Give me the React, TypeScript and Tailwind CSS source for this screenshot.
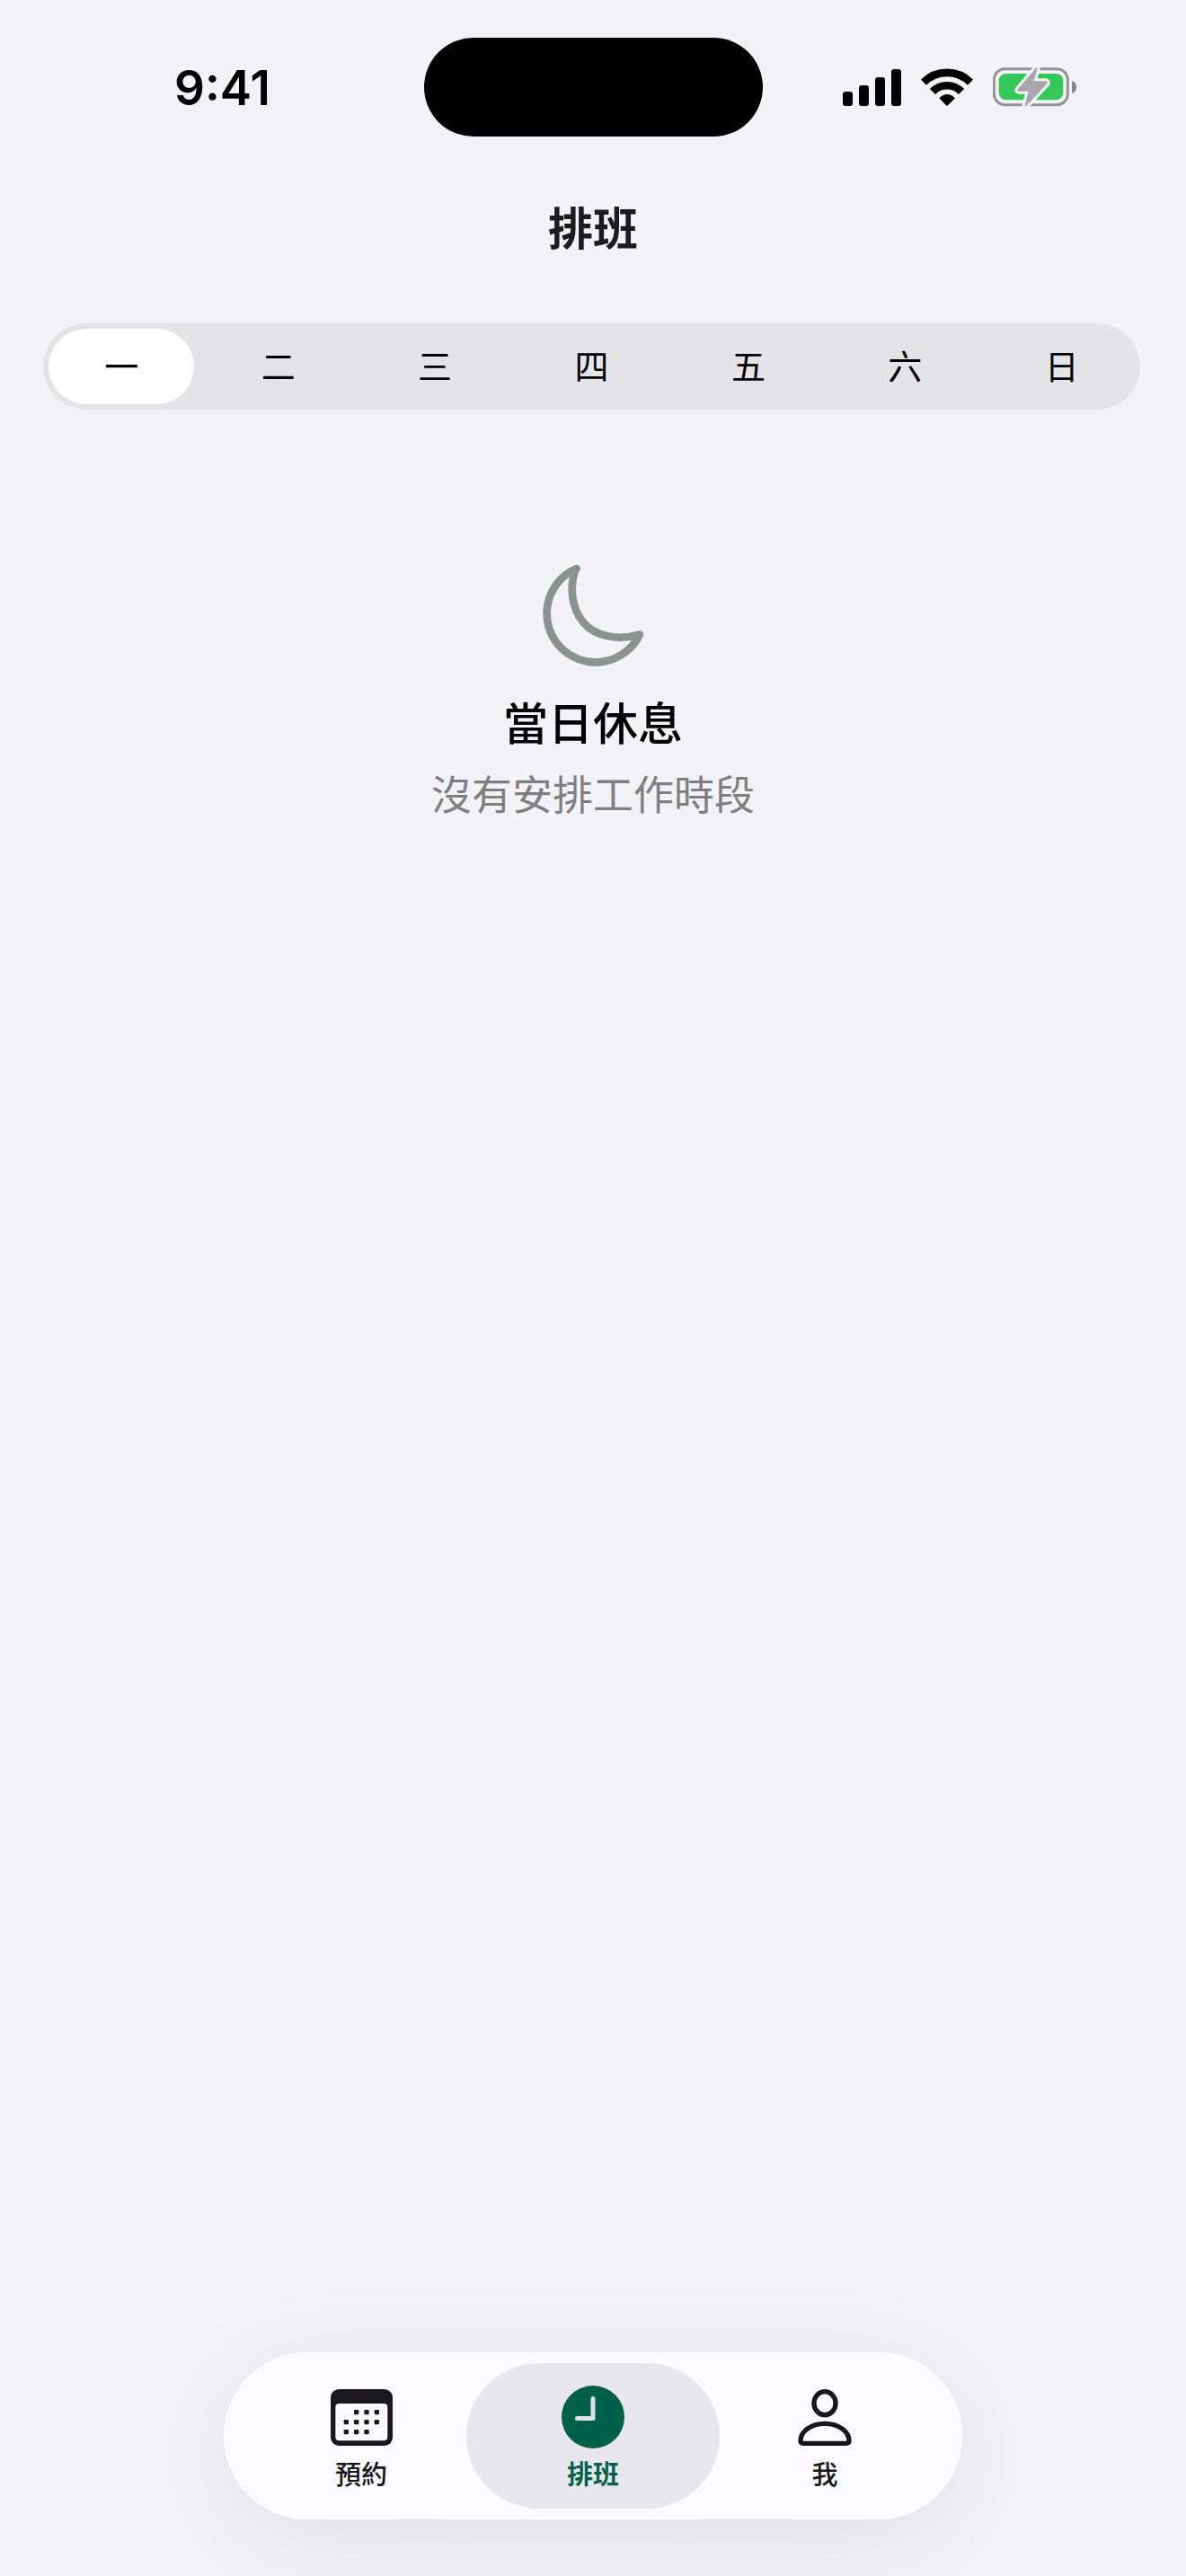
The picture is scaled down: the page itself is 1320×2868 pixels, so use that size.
import { useState } from "react";

const days = ["一", "二", "三", "四", "五", "六", "日"];

function SignalIcon() {
  return (
    <svg className="w-[65px] h-[41px]" viewBox="0 0 65 41" fill="#000">
      <rect x="0" y="25" width="11" height="16" rx="3" />
      <rect x="18" y="18" width="11" height="23" rx="3" />
      <rect x="36" y="9" width="11" height="32" rx="3" />
      <rect x="54" y="0" width="11" height="41" rx="3" />
    </svg>
  );
}

function WifiIcon() {
  return (
    <svg className="w-[58px] h-[42px]" viewBox="613 135 174 126" fill="none">
      <path d="M622 182A110 110 0 0 1 778 182" stroke="#000" strokeWidth="26" />
      <path d="M652 213A67 67 0 0 1 748 213" stroke="#000" strokeWidth="26" />
      <path d="M674 235Q686 222 700 222Q715 222 727 235L703 259Q700 262 697 259Z" fill="#000" />
    </svg>
  );
}

function BatteryIcon() {
  const bolt =
    "M1000 135L939 206Q934 214 943 214H974L962 261Q962 266 967 263L1036 189Q1040 180 1031 180H992L1004 138Q1004 133 1000 135Z";
  return (
    <svg className="w-[93px] h-[46px]" viewBox="855 131 279 138" fill="none">
      <rect x="859" y="139" width="246" height="120" rx="36" stroke="#949397" strokeWidth="9" />
      <rect x="875" y="155" width="215" height="88" rx="24" fill="#34c759" />
      <path d="M1119 179Q1134 184 1134 200Q1134 216 1119 221Z" fill="#858488" />
      <path d={bolt} fill="#a8a7ac" stroke="#f2f2f7" strokeWidth="18" strokeLinejoin="round" />
      <path d={bolt} fill="#a8a7ac" />
    </svg>
  );
}

function MoonIcon() {
  return (
    <svg className="w-[114px] h-[114px]" viewBox="459 82 342 342" fill="none">
      <path
        d="M575 97A163 163 0 1 0 786 317C732 333 665 331 617 296C566 255 545 175 572 98"
        stroke="#8a938d"
        strokeWidth="26"
        strokeLinecap="round"
        strokeLinejoin="round"
      />
    </svg>
  );
}

function CalendarIcon() {
  const dots = [
    [78, 69], [112, 69], [146, 69],
    [44, 102], [78, 102], [112, 102], [146, 102],
    [44, 135], [78, 135], [112, 135],
  ];
  return (
    <svg className="w-[69px] h-[63px]" viewBox="0 0 207 189" fill="#19171c">
      <rect width="207" height="189" rx="28" />
      <rect x="16" y="48" width="174" height="124" rx="12" fill="#fbfaff" />
      {dots.map(([x, y]) => (
        <rect key={`${x}-${y}`} x={x} y={y} width="16" height="16" rx="4" />
      ))}
    </svg>
  );
}

function ClockIcon() {
  return (
    <svg className="size-[70px]" viewBox="0 0 70 70" fill="none">
      <circle cx="35" cy="35" r="35" fill="#006049" />
      <path
        d="M35 14.5V36.5H17.5"
        stroke="#dfe5e6"
        strokeWidth="5"
        strokeLinecap="round"
        strokeLinejoin="round"
      />
    </svg>
  );
}

function PersonIcon() {
  return (
    <svg className="w-[60px] h-[63px]" viewBox="743 207 180 189" fill="none" stroke="#19171c" strokeWidth="16">
      <ellipse cx="833" cy="254" rx="36" ry="39" />
      <path d="M752 379C752 350 785 322 833 322C881 322 914 350 914 379Q914 388 904 388H762Q752 388 752 379Z" />
    </svg>
  );
}

const tabs = [
  { id: "booking", name: "預約", icon: <CalendarIcon /> },
  { id: "schedule", name: "排班", icon: <ClockIcon /> },
  { id: "me", name: "我", icon: <PersonIcon /> },
];

export default function App() {
  const [day, setDay] = useState("一");

  return (
    <div className="min-h-screen flex flex-col bg-[#f2f2f7] text-black font-['Inter','Noto_Sans_CJK_TC',sans-serif]">
      <div className="grid grid-cols-3 items-center pt-[42px]">
        <span className="pl-[194px] pt-[2px] text-[53px] leading-[60px] font-semibold">9:41</span>
        <div className="w-[377px] h-[110px] rounded-full bg-black justify-self-center" />
        <div className="flex items-center justify-end gap-[22px] pr-[122px]">
          <SignalIcon />
          <WifiIcon />
          <BatteryIcon />
        </div>
      </div>

      <header className="pt-[73px] text-center">
        <h1 className="text-[50px] leading-[60px] font-bold text-[#1c1b1e]">排班</h1>
      </header>

      <main className="flex-1 flex flex-col pt-[75px]">
        <div className="flex gap-3 ml-12 mr-[51px] p-[6px] rounded-full bg-[#e4e3e8]">
          {days.map((d) => (
            <button
              key={d}
              type="button"
              aria-pressed={d === day}
              onClick={() => setDay(d)}
              className={`flex-1 h-[84px] rounded-full text-[38px] cursor-pointer ${d === day ? "bg-white" : ""}`}
            >
              {d}
            </button>
          ))}
        </div>

        <section className="flex flex-col items-center pt-[172px] text-center">
          <MoonIcon />
          <h2 className="mt-[34px] text-[50px] leading-[60px] font-medium">當日休息</h2>
          <p className="mt-5 text-[45px] leading-[60px] text-[#7f7f80]">沒有安排工作時段</p>
        </section>
      </main>

      <nav className="flex justify-center pb-[63px]">
        <div className="flex -space-x-6 p-[10px] rounded-full border-2 border-white bg-[#fbfaff] shadow-[0_24px_120px_rgba(0,0,0,0.08)]">
          {tabs.map((tab) => (
            <a
              key={tab.id}
              href={`#${tab.id}`}
              className={`w-[282px] h-[162px] pt-[25px] flex flex-col items-center gap-3 rounded-full text-[29px] leading-[36px] ${
                tab.id === "schedule" ? "bg-[#e8e7eb] text-[#006049] font-bold" : "text-[#19171c] font-medium"
              }`}
            >
              <span className="h-[70px] flex items-center">{tab.icon}</span>
              {tab.name}
            </a>
          ))}
        </div>
      </nav>
    </div>
  );
}
